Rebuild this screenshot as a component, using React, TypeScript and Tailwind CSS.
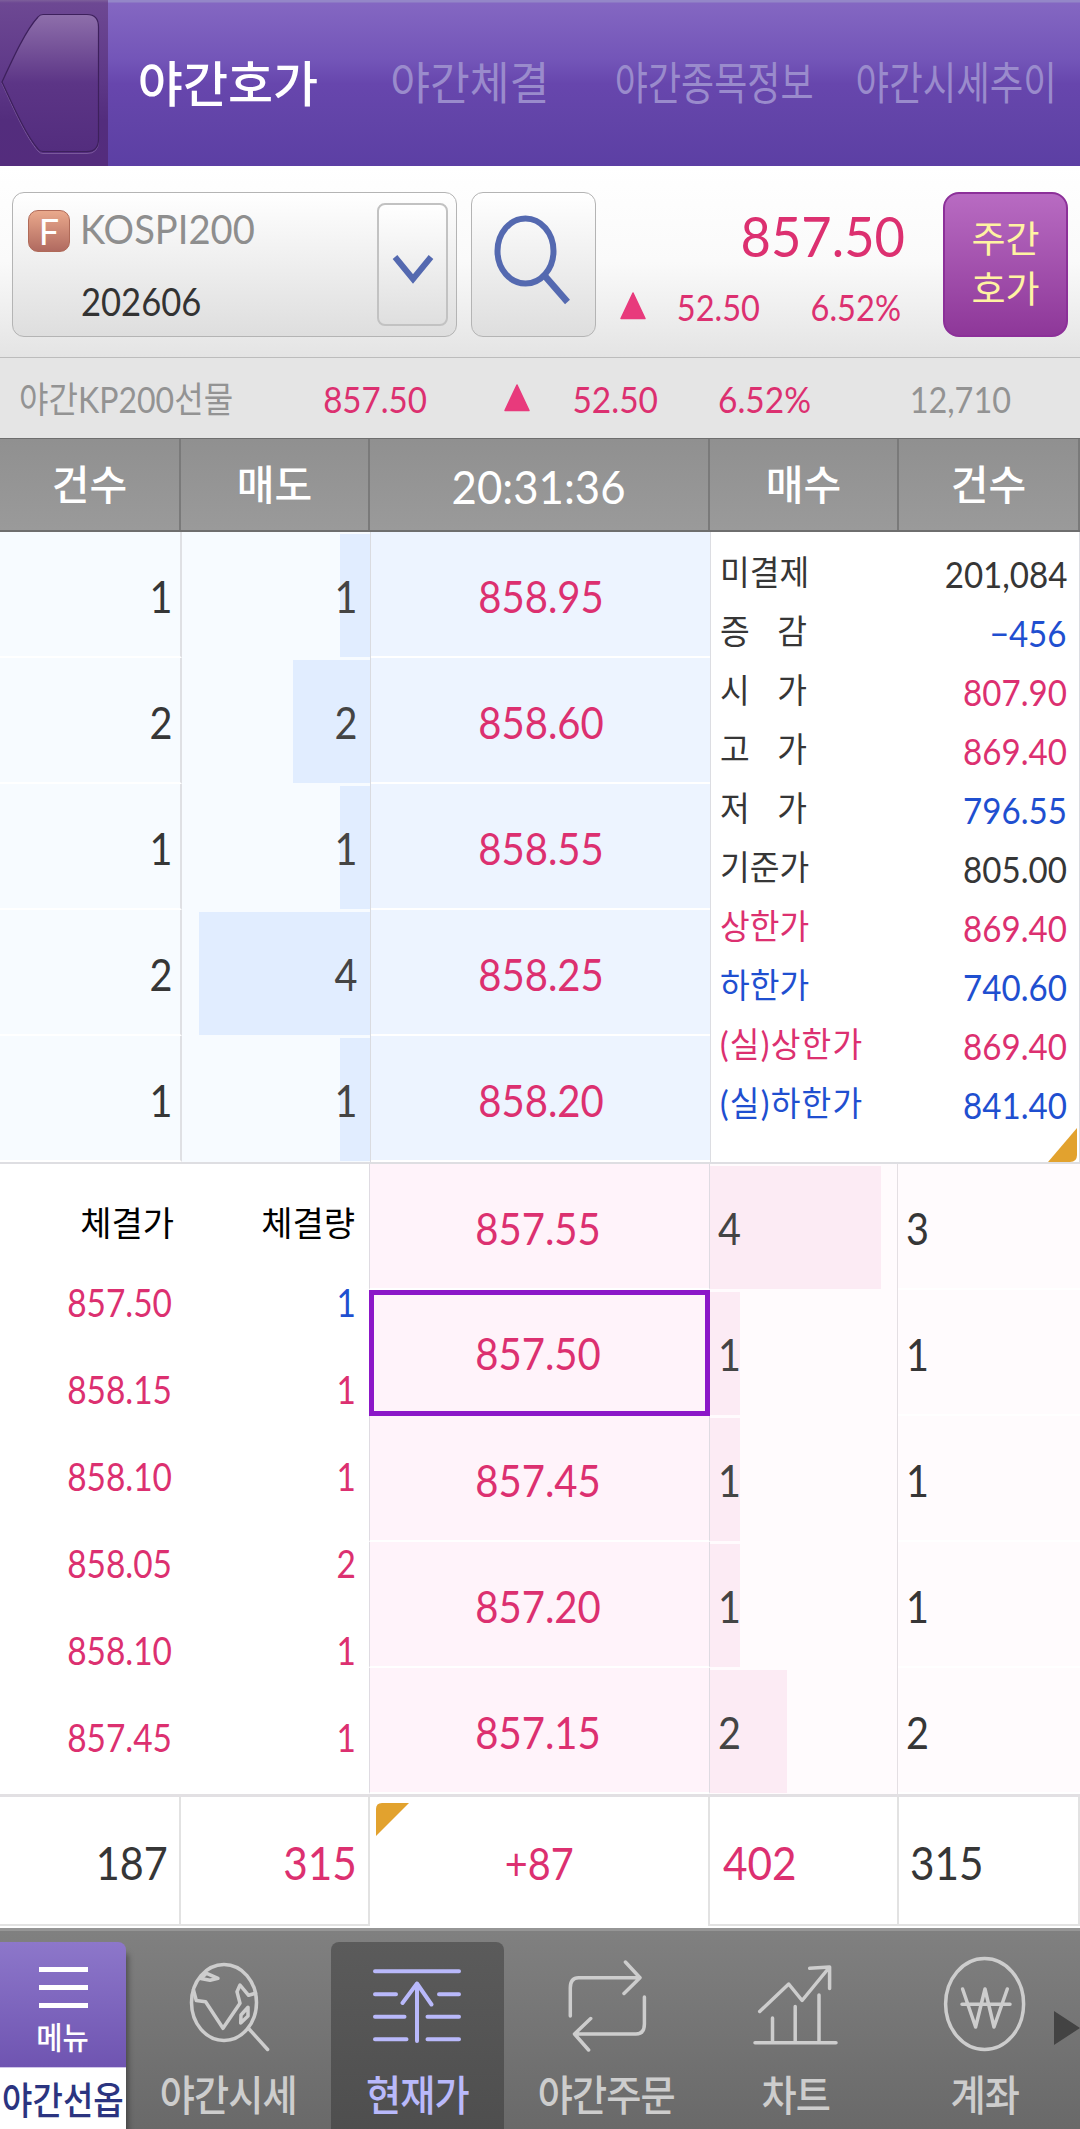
import React from 'react';
import clsx from 'clsx';

const RED = 'text-[#dc3070]';
const BLUE = 'text-[#1f4fd0]';
const DARK = 'text-[#363636]';

const tabs = [
    { label: '야간호가', cell: 'w-[240px]', text: 'text-[49px] font-medium text-white' },
    { label: '야간체결', cell: 'w-[244px]', text: 'text-[45px] scale-x-[0.96] text-[#9a8bcc]' },
    { label: '야간종목정보', cell: 'w-[244px]', text: 'text-[45px] scale-x-[0.8] text-[#9a8bcc]' },
    { label: '야간시세추이', cell: 'w-[240px]', text: 'text-[45px] scale-x-[0.81] text-[#9a8bcc]' },
];

const asks = [
    { count: 1, qty: 1, price: '858.95', bar: 30 },
    { count: 2, qty: 2, price: '858.60', bar: 77 },
    { count: 1, qty: 1, price: '858.55', bar: 30 },
    { count: 2, qty: 4, price: '858.25', bar: 171 },
    { count: 1, qty: 1, price: '858.20', bar: 30 },
];

const bids = [
    { price: '857.55', qty: 4, count: 3, bar: 171 },
    { price: '857.50', qty: 1, count: 1, bar: 30, current: true },
    { price: '857.45', qty: 1, count: 1, bar: 30 },
    { price: '857.20', qty: 1, count: 1, bar: 30 },
    { price: '857.15', qty: 2, count: 2, bar: 77 },
];

const info = [
    { label: ['미결제'], value: '201,084', labelColor: DARK, color: DARK },
    { label: ['증', '감'], value: '−456', labelColor: DARK, color: BLUE },
    { label: ['시', '가'], value: '807.90', labelColor: DARK, color: RED },
    { label: ['고', '가'], value: '869.40', labelColor: DARK, color: RED },
    { label: ['저', '가'], value: '796.55', labelColor: DARK, color: BLUE },
    { label: ['기준가'], value: '805.00', labelColor: DARK, color: DARK },
    { label: ['상한가'], value: '869.40', labelColor: RED, color: RED },
    { label: ['하한가'], value: '740.60', labelColor: BLUE, color: BLUE },
    { label: ['(실)상한가'], value: '869.40', labelColor: RED, color: RED },
    { label: ['(실)하한가'], value: '841.40', labelColor: BLUE, color: BLUE },
];

const trades = [
    { price: '857.50', qty: 1, color: BLUE },
    { price: '858.15', qty: 1, color: RED },
    { price: '858.10', qty: 1, color: RED },
    { price: '858.05', qty: 2, color: RED },
    { price: '858.10', qty: 1, color: RED },
    { price: '857.45', qty: 1, color: RED },
];

function UpMark() {
    return (
        <svg width="26" height="28" viewBox="0 0 26 28" className="shrink-0">
            <path d="M13 1 25 26.5H1Z" fill="#e83a7c" stroke="#e83a7c" strokeWidth="1.5" strokeLinejoin="round" />
        </svg>
    );
}

function Header() {
    return (
        <header className="flex h-[166px] bg-[linear-gradient(#9487c8_0px,#9487c8_2px,#8467c2_3px,#7355b8_60px,#6746ad_84px,#6244a8_120px,#5c3fa4_166px)]">
            <div className="w-[108px] shrink-0 bg-[linear-gradient(#7d5f9b_0px,#6d4893_3px,#5d3787_82px,#532d7d_120px,#542c7d_166px)]">
                <svg width="108" height="166" viewBox="0 0 108 166" fill="none">
                    <defs>
                        <linearGradient id="back" x1="0" y1="0" x2="0" y2="1">
                            <stop offset="0" stopColor="#8e6fab" />
                            <stop offset="0.5" stopColor="#5c3586" />
                            <stop offset="1" stopColor="#532d7e" />
                        </linearGradient>
                    </defs>
                    <path d="M2 83.5C14 57 26 31 38 18Q40 15.500 43 15.500H87Q98.500 15.500 98.500 28V141Q98.500 153.500 87 153.500H43Q40 153.500 38 151C26 137 14 110 2 83.5Z" stroke="#7a589c" strokeWidth="1" />
                    <path d="M2 82C14 56 26 30 38 17Q40 14.500 43 14.500H87Q98.500 14.500 98.500 27V139Q98.500 151.500 87 151.500H43Q40 151.500 38 149C26 135 14 108 2 82Z" fill="url(#back)" stroke="#3d205c" strokeWidth="1.2" />
                </svg>
            </div>
            {tabs.map(t => (
                <div key={t.label} className={clsx('flex shrink-0 items-center justify-center', t.cell)}>
                    <span className={clsx('whitespace-nowrap leading-none', t.text)}>{t.label}</span>
                </div>
            ))}
        </header>
    );
}

function SymbolBar() {
    return (
        <section className="flex h-[192px] border-b border-[#bcbcbc] bg-linear-to-b from-white via-[#fafafa] to-[#e4e4e4] pt-[26px] pl-[12px]">
            <div className="flex h-[145px] w-[445px] justify-between rounded-xl border border-[#b4b4b4] bg-linear-to-b from-white to-[#dedede]">
                <div className="pl-[15px] pt-[16px]">
                    <div className="flex h-[43px] items-center">
                        <div className="flex size-[42px] items-center justify-center rounded-[10px] border border-[#b06a58] bg-linear-to-b from-[#eaa98c] to-[#b06a60]">
                            <span className="text-[36px] leading-none text-white">F</span>
                        </div>
                        <span className="mb-[4px] ml-[10px] origin-left scale-x-[0.93] text-[41px] leading-none text-[#8e8e8e]">KOSPI200</span>
                    </div>
                    <div className="ml-[53px] mt-[30px] origin-left scale-x-[0.91] text-[38px] leading-none text-[#333]">202606</div>
                </div>
                <div className="mr-[8px] mt-[10px] flex h-[123px] w-[71px] items-center justify-center rounded-lg border-2 border-[#c2c2c2] bg-linear-to-b from-white to-[#dfdfdf]">
                    <svg width="42" height="30" viewBox="0 0 42 30" className="mt-[8px]">
                        <path d="M3 3 21 25 39 3" fill="none" stroke="#5469b0" strokeWidth="6" />
                    </svg>
                </div>
            </div>
            <div className="ml-[14px] h-[145px] w-[125px] rounded-xl border border-[#b4b4b4] bg-linear-to-b from-white to-[#dedede]">
                <svg width="123" height="143" viewBox="0 0 123 143" fill="none" stroke="#5469b0">
                    <ellipse cx="53.500" cy="58" rx="28" ry="32.500" strokeWidth="6" />
                    <path d="M72 82 95.500 109" strokeWidth="6.500" />
                </svg>
            </div>
            <div className="w-[309px]">
                <div className={clsx('mt-[13px] origin-right scale-x-[0.92] text-right text-[57px] leading-[60px]', RED)}>857.50</div>
                <div className={clsx('mt-[21px] flex h-[40px] items-center text-[37px] leading-none', RED)}>
                    <div className="ml-[24px] flex"><UpMark /></div>
                    <span className="w-[114px] origin-right scale-x-[0.88] text-right">52.50</span>
                    <span className="w-[141px] origin-right scale-x-[0.88] text-right">6.52%</span>
                </div>
            </div>
            <div className="ml-[38px] flex h-[145px] w-[125px] flex-col items-center justify-center rounded-2xl border-2 border-[#8c3099] bg-linear-to-b from-[#b86bc2] to-[#8e3799] pb-[2px] text-[37px] leading-[50px] text-[#fff3a2]">
                <span>주간</span>
                <span>호가</span>
            </div>
        </section>
    );
}

function FuturesLine() {
    return (
        <section className={clsx('flex h-[80px] items-center bg-[#e5e5e5] pt-[2px] text-[36px] leading-none', RED)}>
            <span className="ml-[19px] w-[228px] origin-left scale-x-[0.89] whitespace-nowrap text-[#939393]">야간KP200선물</span>
            <span className="w-[180px] origin-right scale-x-[0.92] text-right">857.50</span>
            <div className="ml-[77px] flex pb-[3px]"><UpMark /></div>
            <span className="w-[128px] origin-right scale-x-[0.93] text-right">52.50</span>
            <span className="w-[153px] origin-right scale-x-[0.93] text-right">6.52%</span>
            <span className="w-[200px] origin-right scale-x-[0.9] text-right text-[#939393]">12,710</span>
        </section>
    );
}

function ColumnHeads() {
    const cell = 'flex items-center justify-center border-r-2 border-[#7a7a7a]';
    return (
        <div className="grid h-[94px] grid-cols-[181px_189px_340px_189px_181px] border-b-2 border-t border-[#6e6e6e] bg-linear-to-b from-[#909090] to-[#9a9a9a] text-[41px] font-medium leading-none text-white">
            <div className={cell}>건수</div>
            <div className={cell}>매도</div>
            <div className={cell}><span className="scale-x-[0.93] pt-[3px] text-[47px] font-normal">20:31:36</span></div>
            <div className={cell}>매수</div>
            <div className={cell}>건수</div>
        </div>
    );
}

function Price({ value }: { value: string }) {
    return <span className={clsx('scale-x-[0.91] text-[44px]', RED)}>{value}</span>;
}

function AskSection() {
    return (
        <div className="flex h-[632px] border-b-2 border-[#dedee2] text-[44px] leading-none">
            <div className="w-[710px]">
                {asks.map(row => (
                    <div key={row.price} className="flex h-[126px]">
                        <div className="flex w-[182px] items-center justify-end border-b-2 border-r-2 border-b-white border-r-[#dfe0e4] bg-[#f7fbff] pr-[7px] pt-[3px]">
                            <span className={clsx('origin-right scale-x-[0.9]', DARK)}>{row.count}</span>
                        </div>
                        <div className="flex w-[189px] justify-end border-r border-[#dadbe0] bg-[#f7fbff] py-[2px]">
                            <div className="flex h-[123px] items-center justify-end bg-[#e1edff] pr-[12px] text-[#444]" style={{ width: row.bar }}>
                                <span className="origin-right scale-x-[0.9]">{row.qty}</span>
                            </div>
                        </div>
                        <div className="flex w-[339px] items-center justify-center border-b-2 border-white bg-[#edf4ff] pt-[3px]">
                            <Price value={row.price} />
                        </div>
                    </div>
                ))}
            </div>
            <div className="relative flex-1 border-x border-[#dcdde2] bg-white pt-[12px] pr-[12px] pl-[9px]">
                {info.map(item => (
                    <div key={item.label.join('')} className="flex h-[59px] items-center justify-between">
                        <span className={clsx('flex origin-left scale-x-[0.95] whitespace-nowrap pb-[3px] text-[34px]', item.labelColor, item.label[0].startsWith('(') && 'tracking-[1.3px]')}>
                            {item.label.map((part, i) => (
                                <span key={part} className={i > 0 ? 'ml-[29px]' : ''}>{part}</span>
                            ))}
                        </span>
                        <span className={clsx('origin-right scale-x-[0.92] pt-[1px] text-[36px]', item.color)}>{item.value}</span>
                    </div>
                ))}
                <svg width="29" height="34" viewBox="0 0 29 34" className="absolute bottom-0 right-[2px]">
                    <path d="M29 0V27Q29 34 22 34H0Z" fill="#e2a22e" />
                </svg>
            </div>
        </div>
    );
}

function BidSection() {
    return (
        <div className="flex h-[633px] border-b-[3px] border-[#e2e0e3] text-[44px] leading-none">
            <div className="w-[369px] bg-white">
                <div className="flex h-[94px] items-center pt-[24px] text-[34px] text-black">
                    <span className="w-[174px] origin-right text-right">체결가</span>
                    <span className="w-[181px] origin-right text-right">체결량</span>
                </div>
                {trades.map((t, i) => (
                    <div key={i} className="flex h-[87px] items-center text-[38px]">
                        <span className={clsx('w-[172px] origin-right scale-x-[0.88] text-right', RED)}>{t.price}</span>
                        <span className={clsx('w-[184px] origin-right scale-x-[0.88] text-right', t.color)}>{t.qty}</span>
                    </div>
                ))}
            </div>
            <div className="flex-1">
                {bids.map(row => (
                    <div key={row.price} className="flex h-[126px]">
                        <div className={clsx(
                            'flex w-[341px] items-center justify-center bg-[#fff3fa] pr-[3px]',
                            row.current ? 'border-[5px] border-[#8c17c8]' : 'border-x border-b-2 border-x-[#dfdbe2] border-b-white pt-[3px]'
                        )}>
                            <Price value={row.price} />
                        </div>
                        <div className="flex w-[188px] border-r border-[#e4dfe3] bg-[#fffbfd] py-[2px]">
                            <div className="flex h-[123px] items-center bg-[#fcebf4] pl-[8px] text-[#444]" style={{ width: row.bar }}>
                                <span className="origin-left scale-x-[0.9]">{row.qty}</span>
                            </div>
                        </div>
                        <div className="flex flex-1 items-center border-b-2 border-white bg-[#fffbfd] pl-[8px] pt-[3px]">
                            <span className={clsx('origin-left scale-x-[0.9]', DARK)}>{row.count}</span>
                        </div>
                    </div>
                ))}
            </div>
        </div>
    );
}

function Totals() {
    return (
        <div className="grid h-[131px] grid-cols-[181px_189px_340px_189px_181px] bg-white pb-[2px] text-[47px] leading-none">
            <div className={clsx('flex items-center justify-end border-b-2 border-r-2 border-[#e2e2e2] pr-[11px] pt-[3px]', DARK)}>
                <span className="origin-right scale-x-[0.88]">187</span>
            </div>
            <div className={clsx('flex items-center justify-end border-b-2 border-r-2 border-[#e2e2e2] pr-[11px] pt-[3px]', RED)}>
                <span className="origin-right scale-x-[0.9]">315</span>
            </div>
            <div className={clsx('relative flex items-center justify-center border-r-2 border-[#e2e2e2] pt-[3px] text-[44px]', RED)}>
                <svg width="33" height="33" viewBox="0 0 33 33" className="absolute left-[6px] top-[6px]">
                    <path d="M0 33V6Q0 0 6 0H33Z" fill="#e2a22e" />
                </svg>
                <span className="scale-x-[0.9]">+87</span>
            </div>
            <div className={clsx('flex items-center border-b-2 border-r-2 border-[#e2e2e2] pl-[13px] pt-[3px]', RED)}>
                <span className="origin-left scale-x-[0.9]">402</span>
            </div>
            <div className={clsx('flex items-center border-b-2 border-r-2 border-[#e2e2e2] pl-[11px] pt-[3px]', DARK)}>
                <span className="origin-left scale-x-[0.9]">315</span>
            </div>
        </div>
    );
}

const navItems = [
    {
        label: '야간시세',
        icon: (
            <>
                <ellipse cx="45" cy="47.500" rx="32.500" ry="38" />
                <path d="M69.600 73.500 88.600 94.500M14.500 35 17.300 45.500 26.600 46.700 44 73.300 61 48.300 58 36.700 61 30 69.600 40.300 76.500 38.300" />
                <path d="M21.800 23.500 27.600 18.300 39 23.300 31 25.300ZM69 52.300 62 60 61.700 68 69 61Z" />
            </>
        ),
    },
    {
        label: '현재가',
        active: true,
        icon: (
            <path d="M7 16.300H91M7 39.300H28M71 39.300H91M7 61.700H36.500M59.500 61.700H91M7 84.300H38.500M59.500 84.300H91M49 86V28.500M34.500 48 49 28.500 63.500 49.500" strokeWidth="4" />
        ),
    },
    {
        label: '야간주문',
        icon: (
            <path d="M13.300 61V33Q13.300 22.700 21.500 22.700H82.500M68.400 7 83 22.700 67 38.500M87.400 42V69Q87.400 79 79 79H18M33.700 63.500 17.500 79 31.600 95" />
        ),
    },
    {
        label: '차트',
        icon: (
            <path d="M9 87.700H90M26.500 87V63M49.200 87V51.500M73 87V40M13.700 56.500 42.700 29 56.100 45.500 83.600 12M63.700 13.300 83.600 12V33.500" />
        ),
    },
    {
        label: '계좌',
        icon: (
            <>
                <ellipse cx="49.600" cy="49" rx="39" ry="45.500" />
                <path d="M27.600 34 40.600 72 50 34 59 72 72.300 34M27 49.300H75" />
            </>
        ),
    },
];

function BottomNav() {
    return (
        <nav className="relative flex h-[201px] border-t-[3px] border-[#969696] bg-linear-to-b from-[#808080] to-[#696969] pt-[11px]">
            <div className="z-10 mr-[8px] flex w-[126px] flex-col shadow-[4px_10px_6px_-2px_rgba(0,0,0,0.4)]">
                <div className="flex h-[126px] flex-col items-center rounded-tr-lg border-b border-[#cfc5e8] bg-linear-to-b from-[#8d77ca] to-[#6f54b1]">
                    <div className="mt-[25px] flex flex-col gap-[13px]">
                        <div className="h-[5px] w-[49px] bg-white"></div>
                        <div className="h-[5px] w-[49px] bg-white"></div>
                        <div className="h-[5px] w-[49px] bg-white"></div>
                    </div>
                    <span className="mt-[13px] scale-x-[0.92] text-[31px] font-medium leading-[32px] text-white">메뉴</span>
                </div>
                <div className="flex flex-1 items-center justify-center bg-white">
                    <span className="shrink-0 scale-x-[0.87] whitespace-nowrap text-[38px] font-medium leading-none text-[#2b3480]">야간선옵</span>
                </div>
            </div>
            {navItems.map(item => (
                <div key={item.label} className={clsx('flex w-[189px] shrink-0 justify-center', item.active ? 'text-[#b9b9fb]' : 'text-[#cdcdcd]')}>
                    <div className={clsx('flex w-[173px] flex-col items-center rounded-t-lg', item.active && 'bg-linear-to-b from-[#5b5b5b] to-[#4e4e4e]')}>
                        <svg width="100" height="100" viewBox="0 0 100 100" fill="none" stroke="currentColor" strokeWidth="3.500" strokeLinecap="round" strokeLinejoin="round" className="mt-[13px]">
                            {item.icon}
                        </svg>
                        <span className="mt-[18px] scale-x-[0.91] whitespace-nowrap text-[42px] font-medium leading-[44px] tracking-[-1px]">{item.label}</span>
                    </div>
                </div>
            ))}
            <svg width="26" height="34" viewBox="0 0 26 34" className="absolute right-0 top-[80px]">
                <path d="M0 0 26 17 0 34Z" fill="#434343" />
            </svg>
        </nav>
    );
}

export default function App() {
    return (
        <div className="h-[2129px] w-[1080px] overflow-hidden bg-white font-[Lato,'Noto_Sans_CJK_KR',sans-serif]">
            <Header />
            <SymbolBar />
            <FuturesLine />
            <ColumnHeads />
            <AskSection />
            <BidSection />
            <Totals />
            <BottomNav />
        </div>
    );
}
